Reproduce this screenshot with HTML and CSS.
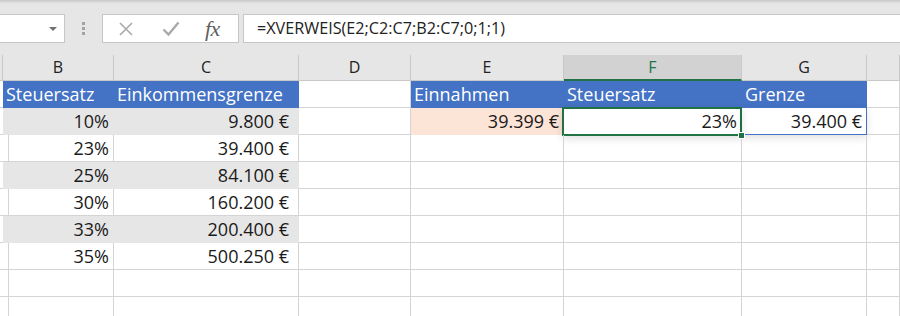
FILE: index.html
```html
<!DOCTYPE html>
<html lang="de">
<head>
    <meta charset="UTF-8">
    <title>XVERWEIS Steuersatz</title>
    <link rel="stylesheet" href="styles.css">
</head>
<body>
    <div class="top-edge"></div>
    <div class="formula-bar">
        <div class="name-box"><span class="caret"></span></div>
        <div class="grip"><i></i><i></i><i></i></div>
        <div class="fx-buttons">
            <svg class="btn-cancel" width="16" height="16" viewBox="0 0 16 16">
                <path d="M2 2 L14 14 M14 2 L2 14" stroke="#a9a9a9" stroke-width="1.6" fill="none"/>
            </svg>
            <svg class="btn-enter" width="18" height="16" viewBox="0 0 18 16">
                <path d="M1.5 8.5 L6.5 13.5 L16.5 1.5" stroke="#a9a9a9" stroke-width="2.4" fill="none"/>
            </svg>
            <span class="btn-fx">fx</span>
        </div>
        <div class="formula-input">=XVERWEIS(E2;C2:C7;B2:C7;0;1;1)</div>
    </div>

    <div class="sheet">
        <!-- column headers -->
        <div class="col-head"></div>
        <div class="col-head">B</div>
        <div class="col-head">C</div>
        <div class="col-head">D</div>
        <div class="col-head">E</div>
        <div class="col-head selected">F</div>
        <div class="col-head">G</div>
        <div class="col-head"></div>

        <!-- row 1 -->
        <div class="cell"></div>
        <div class="cell head">Steuersatz</div>
        <div class="cell head">Einkommensgrenze</div>
        <div class="cell"></div>
        <div class="cell head">Einnahmen</div>
        <div class="cell head">Steuersatz</div>
        <div class="cell head">Grenze</div>
        <div class="cell"></div>

        <!-- row 2 -->
        <div class="cell"></div>
        <div class="cell band num">10%</div>
        <div class="cell band num euro">9.800 €</div>
        <div class="cell"></div>
        <div class="cell input num">39.399 €</div>
        <div class="cell num active">23%<span class="handle"></span></div>
        <div class="cell num result">39.400 €</div>
        <div class="cell"></div>

        <!-- row 3 -->
        <div class="cell"></div>
        <div class="cell num">23%</div>
        <div class="cell num euro">39.400 €</div>
        <div class="cell"></div><div class="cell"></div><div class="cell"></div><div class="cell"></div><div class="cell"></div>

        <!-- row 4 -->
        <div class="cell"></div>
        <div class="cell band num">25%</div>
        <div class="cell band num euro">84.100 €</div>
        <div class="cell"></div><div class="cell"></div><div class="cell"></div><div class="cell"></div><div class="cell"></div>

        <!-- row 5 -->
        <div class="cell"></div>
        <div class="cell num">30%</div>
        <div class="cell num euro">160.200 €</div>
        <div class="cell"></div><div class="cell"></div><div class="cell"></div><div class="cell"></div><div class="cell"></div>

        <!-- row 6 -->
        <div class="cell"></div>
        <div class="cell band num">33%</div>
        <div class="cell band num euro">200.400 €</div>
        <div class="cell"></div><div class="cell"></div><div class="cell"></div><div class="cell"></div><div class="cell"></div>

        <!-- row 7 -->
        <div class="cell"></div>
        <div class="cell num">35%</div>
        <div class="cell num euro">500.250 €</div>
        <div class="cell"></div><div class="cell"></div><div class="cell"></div><div class="cell"></div><div class="cell"></div>

        <!-- row 8 -->
        <div class="cell"></div><div class="cell"></div><div class="cell"></div><div class="cell"></div>
        <div class="cell"></div><div class="cell"></div><div class="cell"></div><div class="cell"></div>

        <!-- row 9 -->
        <div class="cell"></div><div class="cell"></div><div class="cell"></div><div class="cell"></div>
        <div class="cell"></div><div class="cell"></div><div class="cell"></div><div class="cell"></div>
    </div>
</body>
</html>
```

FILE: styles.css
```css
* {
    box-sizing: border-box;
}
body {
    margin: 0;
    background: #e6e6e6;
    font-family: "Open Sans", "Noto Sans", sans-serif;
    color: #1a1a1a;
    overflow: hidden;
}
.top-edge {
    height: 3px;
    background: linear-gradient(#c8c8c8, #e0e0e0);
}
.formula-bar {
    display: flex;
    align-items: center;
    height: 29px;
    margin-top: 11px;
}
.name-box {
    width: 65px;
    height: 29px;
    background: #fff;
    border: 1px solid #c6c6c6;
    border-left: none;
    position: relative;
}
.caret {
    position: absolute;
    left: 49px;
    top: 12px;
    border-left: 4px solid transparent;
    border-right: 4px solid transparent;
    border-top: 4px solid #707070;
}
.grip {
    width: 37px;
    display: flex;
    flex-direction: column;
    align-items: center;
    gap: 2px;
}
.grip i {
    width: 3px;
    height: 3px;
    background: #a3a3a3;
}
.fx-buttons {
    width: 137px;
    height: 29px;
    background: #fff;
    border: 1px solid #c6c6c6;
    display: flex;
    align-items: center;
}
.btn-cancel {
    margin-left: 15px;
}
.btn-enter {
    margin-left: 28px;
}
.btn-fx {
    margin-left: 25px;
    font-family: "Liberation Serif", "DejaVu Serif", serif;
    font-style: italic;
    font-size: 22px;
    line-height: 27px;
    color: #5e5e5e;
    letter-spacing: -0.5px;
}
.formula-input {
    flex: 1;
    height: 29px;
    margin-left: 4px;
    background: #fff;
    border: 1px solid #c6c6c6;
    border-right: none;
    padding-left: 13px;
    font-size: 16.2px;
    line-height: 27px;
    color: #222;
}

.sheet {
    margin-top: 12px;
    display: grid;
    grid-template-columns: 3px 111px 185px 112px 153px 178px 125px 1fr;
    grid-template-rows: 26px repeat(9, 27px);
    background: #fff;
}
.col-head {
    background: #e6e6e6;
    border-right: 1px solid #c9c9c9;
    border-bottom: 1px solid #c9c9c9;
    text-align: center;
    font-size: 16px;
    line-height: 25px;
    color: #222;
}
.col-head.selected {
    background: #d2d2d2;
    color: #217346;
    border-bottom: 2px solid #217346;
    line-height: 24px;
}
.cell {
    border-right: 1px solid #d4d4d4;
    border-bottom: 1px solid #d4d4d4;
    font-size: 18px;
    line-height: 27px;
    padding: 0 4px;
    white-space: nowrap;
    position: relative;
}
.cell.head {
    background: #4472c4;
    border-color: #4472c4;
    color: #fff;
    padding-left: 3px;
}
.cell.band {
    background: #e7e6e6;
    border-color: #e7e6e6;
}
.cell.input {
    background: #fce4d6;
    border-color: #fce4d6;
}
.cell.num {
    text-align: right;
}
.cell.euro {
    padding-right: 9px;
}
.cell.active::after {
    content: "";
    position: absolute;
    top: -1px;
    right: -1px;
    bottom: -2px;
    left: -2px;
    border: 2px solid #217346;
    box-shadow: 0 3px 8px rgba(0, 0, 0, 0.12);
}
.cell.result::after {
    content: "";
    position: absolute;
    top: -1px;
    right: -1px;
    bottom: -1px;
    left: 0;
    border: 1px solid #4472c4;
    border-left: none;
    box-shadow: 0 3px 8px rgba(0, 0, 0, 0.12);
}
.handle {
    position: absolute;
    right: -4px;
    bottom: -5px;
    width: 7px;
    height: 7px;
    background: #217346;
    border: 1px solid #fff;
    z-index: 2;
}
```
